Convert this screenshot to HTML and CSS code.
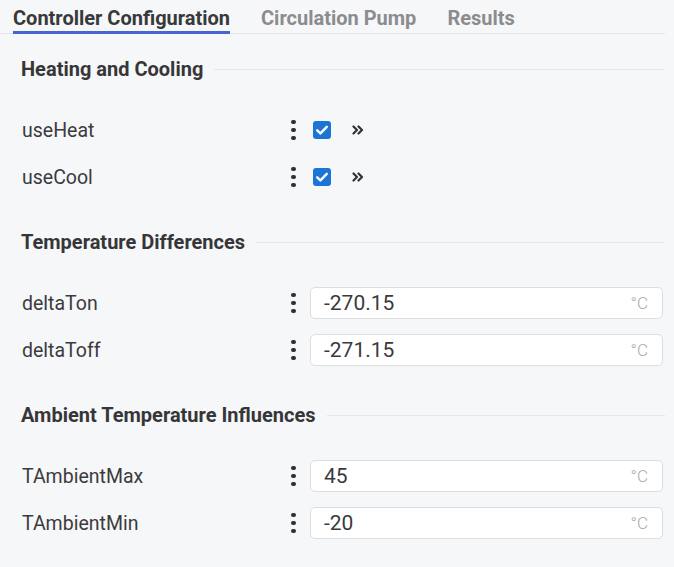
FILE: index.html
```html
<!DOCTYPE html>
<html lang="en">
<head>
<meta charset="utf-8">
<title>Controller Configuration</title>
<link rel="stylesheet" href="styles.css">
</head>
<body>
<nav class="tabs">
  <div class="tab active">Controller Configuration</div>
  <div class="tab">Circulation Pump</div>
  <div class="tab">Results</div>
</nav>

<section class="section">
  <div class="section-head"><h2>Heating and Cooling</h2><span class="rule"></span></div>
  <div class="row">
    <span class="label">useHeat</span>
    <span class="menu"><i></i><i></i><i></i></span>
    <span class="control">
      <span class="check"><svg viewBox="0 0 18 18" width="18" height="18"><path d="M4.2 9.3l3.2 3.1 6.4-6.6" fill="none" stroke="#fff" stroke-width="2.4" stroke-linecap="round" stroke-linejoin="round"/></svg></span>
      <svg class="chev" viewBox="0 0 12 12" width="12" height="12"><path d="M1.5 2.5l3.5 3.5-3.5 3.5M6.5 2.5l3.5 3.5-3.5 3.5" fill="none" stroke="#333" stroke-width="2.2" stroke-linecap="round" stroke-linejoin="round"/></svg>
    </span>
  </div>
  <div class="row">
    <span class="label">useCool</span>
    <span class="menu"><i></i><i></i><i></i></span>
    <span class="control">
      <span class="check"><svg viewBox="0 0 18 18" width="18" height="18"><path d="M4.2 9.3l3.2 3.1 6.4-6.6" fill="none" stroke="#fff" stroke-width="2.4" stroke-linecap="round" stroke-linejoin="round"/></svg></span>
      <svg class="chev" viewBox="0 0 12 12" width="12" height="12"><path d="M1.5 2.5l3.5 3.5-3.5 3.5M6.5 2.5l3.5 3.5-3.5 3.5" fill="none" stroke="#333" stroke-width="2.2" stroke-linecap="round" stroke-linejoin="round"/></svg>
    </span>
  </div>
</section>

<section class="section">
  <div class="section-head"><h2>Temperature Differences</h2><span class="rule"></span></div>
  <div class="row">
    <span class="label">deltaTon</span>
    <span class="menu"><i></i><i></i><i></i></span>
    <span class="input"><span class="value">-270.15</span><span class="unit">°C</span></span>
  </div>
  <div class="row">
    <span class="label">deltaToff</span>
    <span class="menu"><i></i><i></i><i></i></span>
    <span class="input"><span class="value">-271.15</span><span class="unit">°C</span></span>
  </div>
</section>

<section class="section">
  <div class="section-head"><h2>Ambient Temperature Influences</h2><span class="rule"></span></div>
  <div class="row">
    <span class="label">TAmbientMax</span>
    <span class="menu"><i></i><i></i><i></i></span>
    <span class="input"><span class="value">45</span><span class="unit">°C</span></span>
  </div>
  <div class="row">
    <span class="label">TAmbientMin</span>
    <span class="menu"><i></i><i></i><i></i></span>
    <span class="input"><span class="value">-20</span><span class="unit">°C</span></span>
  </div>
</section>
</body>
</html>
```
FILE: styles.css
```css
html, body {
  margin: 0;
  padding: 0;
  background: #f6f7f9;
}
body {
  font-family: Roboto, "Liberation Sans", sans-serif;
  color: #3b3b3d;
  width: 665px;
}
.tabs {
  display: flex;
  gap: 31px;
  padding-left: 13px;
  border-bottom: 1px solid #e4e5e8;
  height: 33px;
}
.tab {
  font-size: 20px;
  font-weight: 700;
  color: #8c8c8e;
  line-height: 22px;
  padding-top: 7px;
  height: 26px;
  box-sizing: content-box;
  white-space: nowrap;
}
.tab.active {
  color: #38393b;
  border-bottom: 3px solid #4565d3;
  height: 24px;
}
.section {
  padding-left: 21px;
  margin-bottom: 37px;
}
.section:first-of-type {
  margin-top: 23px;
}
.section-head {
  display: flex;
  align-items: center;
  gap: 11px;
  height: 24px;
  margin-bottom: 33px;
}
.section-head h2 {
  margin: 0;
  font-size: 20px;
  font-weight: 700;
  color: #363638;
  white-space: nowrap;
}
.rule {
  flex: 1;
  height: 1px;
  background: #e6e7ea;
}
.row {
  display: flex;
  align-items: center;
  height: 32px;
  margin-bottom: 15px;
}
.label {
  width: 269px;
  padding-left: 1px;
  font-size: 19.5px;
  color: #3b3b3d;
}
.menu {
  width: 19px;
  display: flex;
  flex-direction: column;
  align-items: flex-start;
  gap: 3.5px;
}
.menu i {
  display: block;
  width: 4.5px;
  height: 4.5px;
  border-radius: 50%;
  background: #303032;
}
.control {
  display: flex;
  align-items: center;
  gap: 21px;
  padding-left: 3px;
}
.check {
  width: 18px;
  height: 18px;
  border-radius: 3px;
  background: #1b74d6;
  display: flex;
}
.chev {
  display: block;
}
.input {
  width: 353px;
  height: 32px;
  box-sizing: border-box;
  background: #fff;
  border: 1px solid #dcdde0;
  border-radius: 5px;
  display: flex;
  align-items: center;
  justify-content: space-between;
  padding: 0 14px 0 13px;
}
.value {
  font-size: 21px;
  font-weight: 400;
  color: #3a3a3c;
}
.unit {
  font-size: 17px;
  font-weight: 300;
  color: #a9a9ab;
}
```
